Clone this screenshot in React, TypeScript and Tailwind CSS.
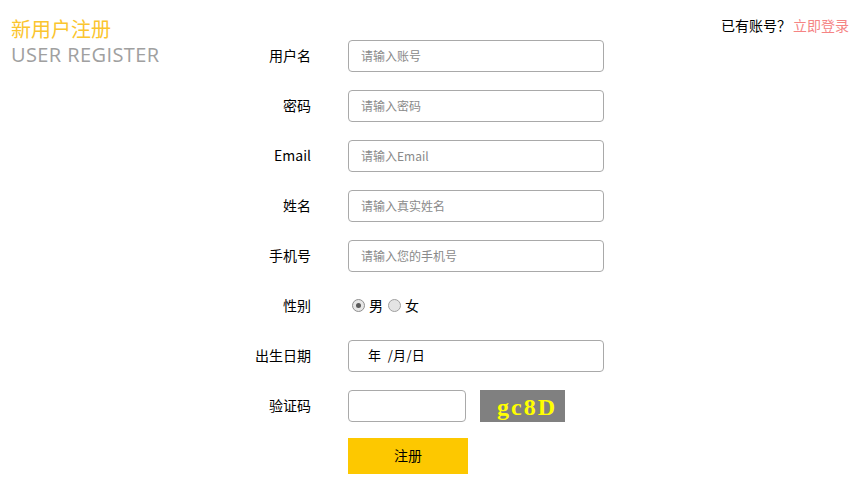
import React from "react";

const font = { fontFamily: '"Noto Sans CJK SC", "Noto Sans", sans-serif' };

function Row({ label, children, mb = "mb-[18px]" }: { label: string; children: React.ReactNode; mb?: string }) {
  return (
    <div className={`flex items-center h-[32px] ${mb}`}>
      <div className="w-[61px] text-right text-[14px] text-black leading-none -mt-[2px]">{label}</div>
      <div className="ml-[37px] flex items-center h-full">{children}</div>
    </div>
  );
}

function TextInput({ placeholder, w = "w-[256px]" }: { placeholder?: string; w?: string }) {
  return (
    <input
      className={`${w} h-[32px] border border-[#a9a9a9] rounded-[4px] pl-[12px] pb-[2px] text-[12px] placeholder:text-[#8a8a8a] outline-none bg-white`}
      placeholder={placeholder}
      style={font}
    />
  );
}

export default function App() {
  return (
    <div className="relative flex w-[856px] h-[484px] bg-white" style={font}>
      <div className="w-[250px] pl-[11px] pt-[16px]">
        <div className="text-[20px] leading-[26px] text-[#fbc52e]">新用户注册</div>
        <div className="text-[20px] leading-[26px] text-[#a0a0a0] tracking-[0.4px]" style={{ fontFamily: '"Open Sans", "Noto Sans", sans-serif' }}>USER REGISTER</div>
      </div>
      <div className="pt-[40px]">
        <Row label="用户名"><TextInput placeholder="请输入账号" /></Row>
        <Row label="密码"><TextInput placeholder="请输入密码" /></Row>
        <Row label="Email"><TextInput placeholder="请输入Email" /></Row>
        <Row label="姓名"><TextInput placeholder="请输入真实姓名" /></Row>
        <Row label="手机号"><TextInput placeholder="请输入您的手机号" /></Row>
        <Row label="性别">
          <div className="flex items-center text-[14px] text-black pl-[4px] -mt-[1px]">
            <span className="w-[13px] h-[13px] rounded-full border border-[#8f8f8f] bg-[#e6e6e6] flex items-center justify-center">
              <span className="w-[5px] h-[5px] rounded-full bg-[#5a5a5a]" />
            </span>
            <span className="ml-[4px]">男</span>
            <span className="ml-[5px] w-[13px] h-[13px] rounded-full border border-[#a0a0a0] bg-[#e4e4e4]" />
            <span className="ml-[4px]">女</span>
          </div>
        </Row>
        <Row label="出生日期">
          <div className="w-[256px] h-[32px] border border-[#a9a9a9] rounded-[4px] pl-[19px] pb-[2px] flex items-center text-[13px] text-black tracking-[0.3px]">
            年&nbsp; /月/日
          </div>
        </Row>
        <Row label="验证码" mb="mb-[16px]">
          <TextInput w="w-[118px]" />
          <div
            className="ml-[14px] w-[85px] h-[32px] bg-[#808080] flex items-center pl-[17px] text-[24px] font-bold text-[#ffff00] tracking-[2px] pt-[2px]"
            style={{ fontFamily: '"Liberation Serif", "DejaVu Serif", serif' }}
          >
            gc8D
          </div>
        </Row>
        <div className="flex">
          <div className="w-[98px]" />
          <button className="w-[120px] h-[36px] bg-[#fdc800] text-[14px] text-black pb-[2px]" style={font}>注册</button>
        </div>
      </div>
      <div className="flex-1 text-right pr-[7px] pt-[15px] text-[14px]">
        <span className="text-black">已有账号？</span>
        <span className="text-[#f58484] ml-[2px]">立即登录</span>
      </div>
    </div>
  );
}
